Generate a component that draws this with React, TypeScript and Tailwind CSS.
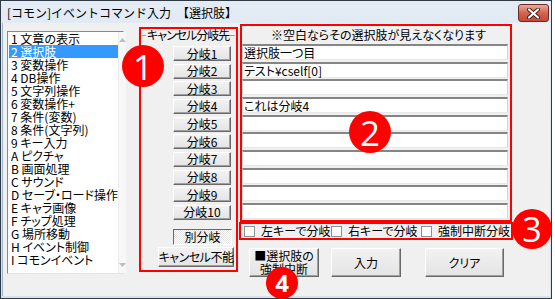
import React from "react";

const items = [
  "1 文章の表示",
  "2 選択肢",
  "3 変数操作",
  "4 DB操作",
  "5 文字列操作",
  "6 変数操作+",
  "7 条件(変数)",
  "8 条件(文字列)",
  "9 キー入力",
  "A ピクチャ",
  "B 画面処理",
  "C サウンド",
  "D セーブ・ロード操作",
  "E キャラ画像",
  "F チップ処理",
  "G 場所移動",
  "H イベント制御",
  "I コモンイベント",
];

const choices = ["選択肢一つ目", "テスト¥cself[0]", "", "これは分岐4", "", "", "", "", "", ""];

const btn =
  "flex items-center justify-center whitespace-nowrap bg-gradient-to-b from-[#f2f2f2] to-[#e4e4e4] border border-t-white border-l-white border-r-[#696969] border-b-[#696969] shadow-[inset_-1px_-1px_0_#a0a0a0] text-[12px] leading-[12px] text-black";

function Badge({ n, className, size }: { n: string; className: string; size: string }) {
  return (
    <div
      className={`absolute rounded-full bg-[#ff0000] text-white flex items-center justify-center leading-none font-['Open_Sans',sans-serif] ${className}`}
    >
      <span className={size}>{n}</span>
    </div>
  );
}

function Check({ label, w }: { label: string; w: string }) {
  return (
    <div className={`flex items-center gap-[6px] ${w}`}>
      <div className="w-[11px] h-[11px] bg-white border border-[#8e8f8f]" />
      <span className="text-[12px] leading-[12px] whitespace-nowrap">{label}</span>
    </div>
  );
}

export default function App() {
  return (
    <div className="w-[555px] h-[299px] bg-white">
      <div className="w-[552px] h-[299px] border border-[#2f3a44] bg-gradient-to-b from-[#e3ebf5] to-[#d6e2f0] flex flex-col px-[1px] pb-[2px]">
        {/* title bar */}
        <div className="h-[22px] flex items-start justify-between">
          <span className="pl-[5px] pt-[5px] text-[12px] leading-[13px] text-black font-['Noto_Sans_CJK_JP',sans-serif]">
            [コモン]イベントコマンド入力　【選択肢】
          </span>
          <div className="mt-[3px] mr-[1px] w-[31px] h-[18px] rounded-[3px] border border-[#6e2a22] bg-gradient-to-b from-[#e9a99a] via-[#d2644f] to-[#c24a36] flex items-center justify-center">
            <svg width="13" height="11" viewBox="0 0 13 11">
              <path d="M2 1.5 L11 9.5 M11 1.5 L2 9.5" stroke="#4a1a14" strokeWidth="4" strokeLinecap="round" />
              <path d="M2 1.5 L11 9.5 M11 1.5 L2 9.5" stroke="#ffffff" strokeWidth="2.2" strokeLinecap="round" />
            </svg>
          </div>
        </div>

        {/* client area */}
        <div className="relative flex-1 bg-[#f0f0f0] border-l border-[#9fb6cf] flex font-['Noto_Sans_CJK_JP',sans-serif] [font-feature-settings:'palt'] text-black">
          {/* command list */}
          <div className="ml-[4px] mt-[8px] w-[117px] h-[243px] bg-white border border-t-[#8a8a8a] border-l-[#8a8a8a] border-r-[#e3e3e3] border-b-[#e3e3e3] flex">
            <div className="flex-1 flex flex-col pl-[1px]">
              {items.map((t, i) => (
                <div
                  key={t}
                  className={`h-[13px] leading-[13px] text-[12px] pl-[2px] whitespace-nowrap ${
                    i === 1 ? "bg-[#3399ff] text-white" : ""
                  }`}
                >
                  {t}
                </div>
              ))}
            </div>
            <div className="w-[17px] bg-[#f7f7f7] border-l border-[#ececec] flex flex-col justify-between items-center py-[6px]">
              <svg width="7" height="4" viewBox="0 0 7 4">
                <path d="M0 4 L3.5 0 L7 4 Z" fill="#bdbdbd" />
              </svg>
              <svg width="7" height="4" viewBox="0 0 7 4">
                <path d="M0 0 L3.5 4 L7 0 Z" fill="#bdbdbd" />
              </svg>
            </div>
          </div>

          {/* cancel branch group */}
          <div className="ml-[15px] mt-[4px] w-[99px] h-[245px] border-2 border-[#ff0000] flex flex-col">
            <div className="h-[12px] flex items-center">
              <div className="ml-[1px] w-[4px] border-t border-[#a0a0a0]" />
              <span className="px-[1px] text-[12px] leading-[12px] tracking-[-1px] whitespace-nowrap">
                キャンセル分岐先
              </span>
              <div className="flex-1 mr-[1px] border-t border-[#a0a0a0]" />
            </div>
            <div className="mt-[5px] ml-[32px] flex flex-col gap-[2.67px]">
              {Array.from({ length: 10 }, (_, i) => (
                <div key={i} className={`${btn} w-[58px] h-[15px]`}>
                  分岐{i + 1}
                </div>
              ))}
            </div>
            <div className="mt-[9px] ml-[32px] w-[59px] h-[16px] flex items-center justify-center text-[12px] leading-[12px] border border-t-[#696969] border-l-[#696969] border-r-white border-b-white bg-[repeating-conic-gradient(#ffffff_0_25%,#e4e4e4_0_50%)] bg-[length:2px_2px]">
              別分岐
            </div>
            <div className={`${btn} mt-[2px] ml-[17px] w-[76px] h-[20px] tracking-[-0.5px]`}>キャンセル不能</div>
          </div>

          {/* choices */}
          <div className="ml-[2px] mt-[1px] w-[272px] flex flex-col">
            <div className="h-[198px] border-2 border-[#ff0000] flex flex-col">
              <div className="mt-[3px] pl-[29px] h-[12px] text-[12px] leading-[12px] whitespace-nowrap">
                ※空白ならその選択肢が見えなくなります
              </div>
              <div className="mt-[3px] flex flex-col gap-[1.67px]">
                {choices.map((c, i) => (
                  <div
                    key={i}
                    className="w-[266px] h-[16px] bg-white border-t-2 border-t-[#858585] border-x border-x-[#d4d4d4] border-b border-b-[#e8e8e8] pl-[1px] text-[12px] leading-[13px] whitespace-nowrap"
                  >
                    {c}
                  </div>
                ))}
              </div>
            </div>
            <div className="-ml-[1px] w-[274px] h-[18px] border-2 border-[#ff0000] flex items-center pl-[3px]">
              <Check label="左キーで分岐" w="w-[87px]" />
              <Check label="右キーで分岐" w="w-[90px]" />
              <Check label="強制中断分岐" w="w-[90px]" />
            </div>
            <div className="mt-[8px] ml-[9px] flex">
              <div className={`${btn} w-[70px] h-[29px] flex-col`}>
                <span>■選択肢の</span>
                <span className="mt-[1px]">強制中断</span>
              </div>
              <div className={`${btn} ml-[12px] w-[70px] h-[29px]`}>入力</div>
              <div className={`${btn} ml-[24px] w-[79px] h-[29px]`}>クリア</div>
            </div>
          </div>

          {/* annotation badges */}
          <Badge n="1" className="left-[119px] top-[22px] w-[42px] h-[42px]" size="text-[35px]" />
          <Badge n="2" className="left-[346px] top-[88px] w-[42px] h-[42px]" size="text-[35px]" />
          <Badge n="3" className="left-[509px] top-[186px] w-[40px] h-[40px]" size="text-[34px]" />
          <Badge n="4" className="left-[263px] top-[244px] w-[32px] h-[32px]" size="text-[24px] font-bold" />
        </div>
      </div>
    </div>
  );
}
